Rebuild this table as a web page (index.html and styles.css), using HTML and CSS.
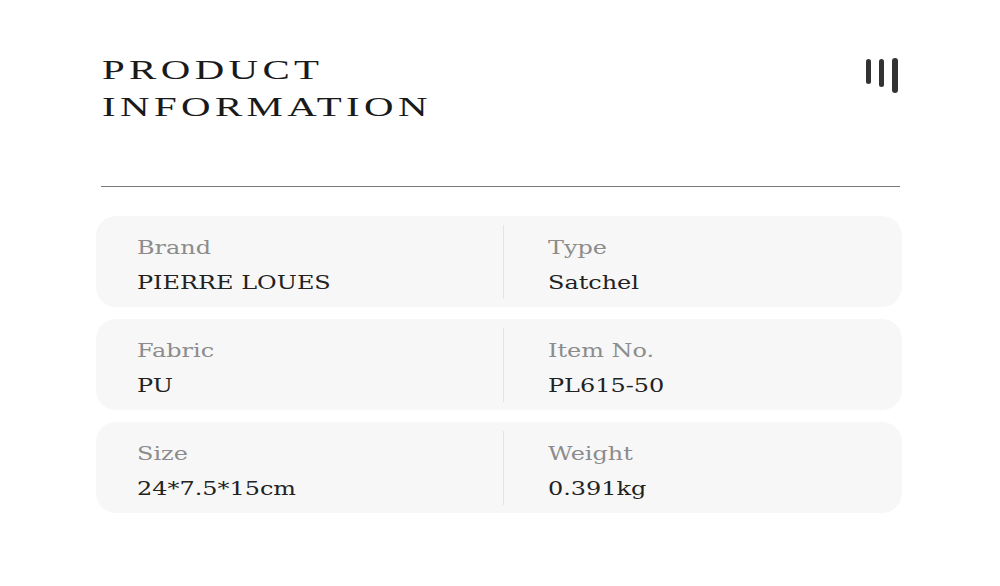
FILE: index.html
```html
<!DOCTYPE html>
<html lang="en">
<head>
<meta charset="utf-8">
<title>Product Information</title>
<link rel="stylesheet" href="styles.css">
</head>
<body>
<main class="page">
  <header class="head">
    <h1 class="title"><span class="stretch">PRODUCT</span><br><span class="stretch">INFORMATION</span></h1>
    <svg class="mark" width="36" height="38" viewBox="0 0 36 38" aria-hidden="true">
      <rect x="1" y="1" width="5" height="25" rx="2.5" fill="#333"/>
      <rect x="14" y="1" width="5" height="28" rx="2.5" fill="#333"/>
      <rect x="27" y="0" width="6" height="35" rx="3" fill="#333"/>
    </svg>
  </header>
  <hr class="rule">
  <section class="specs">
    <div class="card">
      <div class="cell first"><div class="label"><span class="sx">Brand</span></div><div class="value"><span class="sx">PIERRE LOUES</span></div></div>
      <div class="sep"></div>
      <div class="cell second"><div class="label"><span class="sx">Type</span></div><div class="value"><span class="sx">Satchel</span></div></div>
    </div>
    <div class="card">
      <div class="cell first"><div class="label"><span class="sx">Fabric</span></div><div class="value"><span class="sx">PU</span></div></div>
      <div class="sep"></div>
      <div class="cell second"><div class="label"><span class="sx">Item No.</span></div><div class="value"><span class="sx">PL615-50</span></div></div>
    </div>
    <div class="card">
      <div class="cell first"><div class="label"><span class="sx">Size</span></div><div class="value"><span class="sx">24*7.5*15cm</span></div></div>
      <div class="sep"></div>
      <div class="cell second"><div class="label"><span class="sx">Weight</span></div><div class="value"><span class="sx">0.391kg</span></div></div>
    </div>
  </section>
</main>
</body>
</html>
```
FILE: styles.css
```css
html, body {
  margin: 0;
  padding: 0;
  background: #ffffff;
}
body {
  width: 1000px;
  height: 586px;
  overflow: hidden;
}
.page {
  width: 799px;
  margin-left: 101px;
  padding-top: 51px;
}
.head {
  display: flex;
  justify-content: space-between;
  align-items: flex-start;
}
.title {
  margin: 0 0 0 1px;
  font-family: "Liberation Serif", "Times New Roman", serif;
  font-weight: normal;
  font-size: 28px;
  line-height: 37px;
  letter-spacing: 3px;
  color: #1a1a1a;
}
.stretch {
  display: inline-block;
  transform: scaleX(1.46);
  transform-origin: left center;
}
.mark {
  display: block;
  margin-top: 7px;
  margin-right: -1px;
  flex: none;
}
.rule {
  margin: 61px 0 0 0;
  border: 0;
  height: 1px;
  background: #7a7a7a;
}
.specs {
  margin: 29px -2px 0 -5px;
  display: flex;
  flex-direction: column;
  gap: 12px;
}
.card {
  display: flex;
  height: 91px;
  box-sizing: border-box;
  background: #f7f7f7;
  border-radius: 20px;
}
.cell {
  padding-top: 15px;
  box-sizing: border-box;
  font-family: "DejaVu Serif", serif;
  font-size: 19px;
  line-height: 33px;
  white-space: nowrap;
}
.first {
  width: 407px;
  padding-left: 41px;
}
.second {
  flex: 1;
  padding-left: 44px;
}
.sep {
  width: 1px;
  background: #e4e4e4;
  margin: 9px 0 8px 0;
  flex: none;
}
.label {
  color: #8c8c8c;
}
.value {
  color: #222222;
  margin-top: 2px;
}
.sx {
  display: inline-block;
  transform: scaleX(1.26);
  transform-origin: left center;
}
```
